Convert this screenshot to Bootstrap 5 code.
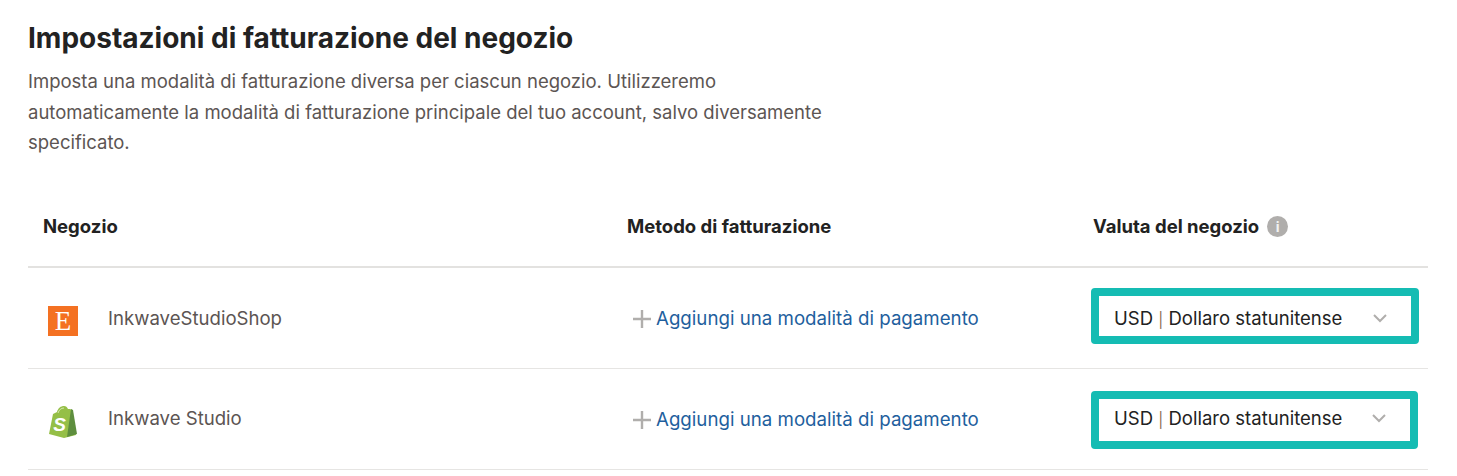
<!DOCTYPE html>
<html>
<head>
    <title>Impostazioni di fatturazione</title>
    <link href="https://cdn.jsdelivr.net/npm/bootstrap@5.3.0/dist/css/bootstrap.min.css" rel="stylesheet">
    <style>
        body { font-family: "Inter", "Liberation Sans", sans-serif; color: #5c5553; background: #fff; }
        .page-wrap { width: 1400px; margin-left: 28px; padding-top: 21px; }
        .page-title { font-size: 28px; line-height: 34px; font-weight: 700; color: #222; margin: 0 0 11px; }
        .page-desc { width: 830px; font-size: 18.5px; line-height: 30.5px; margin: 0; }
        .store-head { height: 84px; margin-top: 26.5px; padding-top: 3px; border-bottom: 2px solid #e3e2e0; font-size: 18.5px; font-weight: 700; color: #222; }
        .store-row { height: 101px; border-bottom: 1px solid #e6e5e3; font-size: 18.6px; }
        .col-store { width: 598px; padding-left: 15px; }
        .col-pay { width: 465px; }
        .head-store { width: 599px; padding-left: 15px; }
        .head-pay { width: 466px; }
        .logo-box { width: 65px; padding-left: 4px; }
        .logo-box svg { display: block; margin-top: 4px; }
        .nudge-down { padding-top: 2px; }
        .nudge-down .logo-box svg { margin-top: 2px; }
        .info-dot { width: 21px; height: 21px; border-radius: 50%; background: #b0aeac; color: #f2f2f2; font-size: 14px; font-weight: 700; }
        .plus-wrap { padding-left: 6px; }
        .add-link { color: #1f5f9e; text-decoration: none; font-size: 18.7px; }
        .cur-box { width: 328px; border: 8px solid #15bcb3; border-radius: 4px; padding-left: 15px; padding-right: 24px; color: #222; font-size: 18.55px; }
        .cur-first { height: 56px; margin-bottom: 4px; padding-top: 5px; }
        .cur-second { width: 327px; height: 58px; margin-top: 2px; padding-bottom: 3px; }
        .cur-sep { color: #8a6a50; font-size: 15px; }
    </style>
</head>
<body>
<div class="page-wrap">
    <h1 class="page-title">Impostazioni di fatturazione del negozio</h1>
    <p class="page-desc">Imposta una modalità di fatturazione diversa per ciascun negozio. Utilizzeremo<br>automaticamente la modalità di fatturazione principale del tuo account, salvo diversamente<br>specificato.</p>

    <div class="store-head d-flex align-items-center">
        <div class="head-store">Negozio</div>
        <div class="head-pay">Metodo di fatturazione</div>
        <div class="d-flex align-items-center gap-2">Valuta del negozio <span class="info-dot d-flex align-items-center justify-content-center">i</span></div>
    </div>

    <div class="store-row d-flex align-items-center">
        <div class="col-store nudge-down d-flex align-items-center">
            <div class="logo-box">
                <svg width="31" height="31" viewBox="0 0 31 31"><rect x="1" y="1" width="30" height="30" fill="#f47122"/><text x="16" y="25" text-anchor="middle" font-family="Liberation Serif" font-size="27" fill="#fff">E</text></svg>
            </div>
            InkwaveStudioShop
        </div>
        <div class="col-pay plus-wrap nudge-down d-flex align-items-center gap-1">
            <svg width="20" height="20" viewBox="0 0 20 20"><path d="M10 1v18M1 10h18" stroke="#b0aeac" stroke-width="2.4"/></svg>
            <a class="add-link" href="#">Aggiungi una modalità di pagamento</a>
        </div>
        <div class="cur-box cur-first d-flex align-items-center justify-content-between">
            <span>USD <span class="cur-sep">|</span> Dollaro statunitense</span>
            <svg width="14" height="9" viewBox="0 0 14 9"><path d="M1 1l6 6 6-6" fill="none" stroke="#b0aeac" stroke-width="2"/></svg>
        </div>
    </div>

    <div class="store-row d-flex align-items-center">
        <div class="col-store d-flex align-items-center">
            <div class="logo-box">
                <svg width="31" height="33" viewBox="0 0 31 33"><path d="M2 29L6 9l4-2c1-4 4-6 7-6 2 0 3 1 4 3l2 0 2 1 4 25-12 3z" fill="#95bf47"/><path d="M20 32l10-3-4-24-2-1-4 28z" fill="#5e8e3e"/><path d="M11 8c1-3 3-5 6-5" fill="none" stroke="#d4e6ad" stroke-width="1"/><text x="12.5" y="26" text-anchor="middle" font-family="Liberation Sans" font-style="italic" font-weight="700" font-size="19" fill="#fff">S</text></svg>
            </div>
            Inkwave Studio
        </div>
        <div class="col-pay plus-wrap nudge-down d-flex align-items-center gap-1">
            <svg width="20" height="20" viewBox="0 0 20 20"><path d="M10 1v18M1 10h18" stroke="#b0aeac" stroke-width="2.4"/></svg>
            <a class="add-link" href="#">Aggiungi una modalità di pagamento</a>
        </div>
        <div class="cur-box cur-second d-flex align-items-center justify-content-between">
            <span>USD <span class="cur-sep">|</span> Dollaro statunitense</span>
            <svg width="14" height="9" viewBox="0 0 14 9"><path d="M1 1l6 6 6-6" fill="none" stroke="#b0aeac" stroke-width="2"/></svg>
        </div>
    </div>
</div>
<script src="https://cdn.jsdelivr.net/npm/bootstrap@5.3.0/dist/js/bootstrap.bundle.min.js"></script>
</body>
</html>
